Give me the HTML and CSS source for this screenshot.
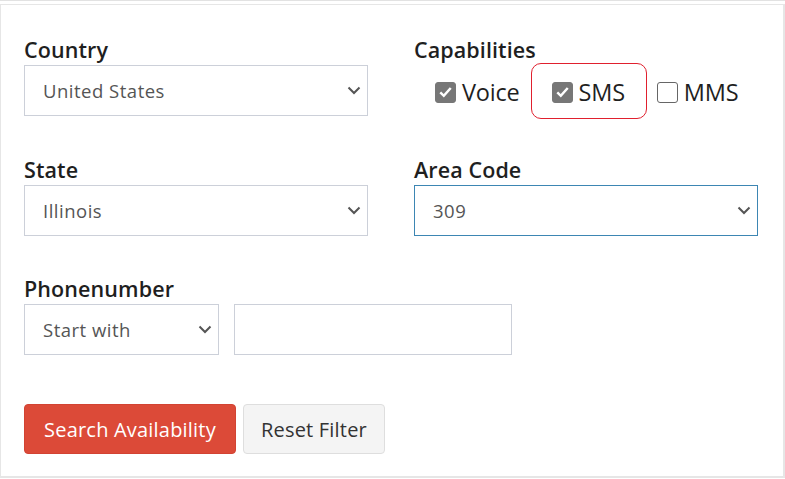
FILE: index.html
```html
<!DOCTYPE html>
<html>
<head>
<meta charset="utf-8">
<link rel="stylesheet" href="styles.css">
</head>
<body>
<div class="topline"></div>
<div class="card">
  <div class="grid">
    <div class="field">
      <div class="label">Country</div>
      <div class="select">
        <span>United States</span>
        <svg class="chev" width="14" height="9" viewBox="0 0 14 9"><path d="M1.5 1.5 L7 7 L12.5 1.5" fill="none" stroke="#555" stroke-width="2"/></svg>
      </div>
    </div>
    <div class="field">
      <div class="label">Capabilities</div>
      <div class="caps">
        <div class="cap">
          <span class="box checked"><svg width="20" height="20" viewBox="0 0 20 20"><path d="M4.5 10.5 L8.2 14 L15.5 5.8" fill="none" stroke="#fff" stroke-width="2.6"/></svg></span>
          <span class="cap-text">Voice</span>
        </div>
        <div class="cap highlighted">
          <span class="box checked"><svg width="20" height="20" viewBox="0 0 20 20"><path d="M4.5 10.5 L8.2 14 L15.5 5.8" fill="none" stroke="#fff" stroke-width="2.6"/></svg></span>
          <span class="cap-text">SMS</span>
        </div>
        <div class="cap">
          <span class="box"></span>
          <span class="cap-text">MMS</span>
        </div>
      </div>
    </div>
    <div class="field">
      <div class="label">State</div>
      <div class="select">
        <span>Illinois</span>
        <svg class="chev" width="14" height="9" viewBox="0 0 14 9"><path d="M1.5 1.5 L7 7 L12.5 1.5" fill="none" stroke="#555" stroke-width="2"/></svg>
      </div>
    </div>
    <div class="field">
      <div class="label">Area Code</div>
      <div class="select focused">
        <span>309</span>
        <svg class="chev" width="14" height="9" viewBox="0 0 14 9"><path d="M1.5 1.5 L7 7 L12.5 1.5" fill="none" stroke="#555" stroke-width="2"/></svg>
      </div>
    </div>
    <div class="field wide">
      <div class="label">Phonenumber</div>
      <div class="phone-row">
        <div class="select small">
          <span>Start with</span>
          <svg class="chev" width="14" height="9" viewBox="0 0 14 9"><path d="M1.5 1.5 L7 7 L12.5 1.5" fill="none" stroke="#555" stroke-width="2"/></svg>
        </div>
        <div class="input"></div>
      </div>
    </div>
  </div>
  <div class="actions">
    <button class="btn primary">Search Availability</button>
    <button class="btn secondary">Reset Filter</button>
  </div>
</div>
</body>
</html>
```
FILE: styles.css
```css
html, body {
  margin: 0;
  padding: 0;
  background: #fff;
}
body {
  width: 785px;
  height: 479px;
  overflow: hidden;
  font-family: "Open Sans", Lato, sans-serif;
}
.topline {
  height: 1px;
  background: #e2e2e2;
  margin-bottom: 3px;
}
.card {
  box-sizing: border-box;
  width: 785px;
  height: 474px;
  border: 1px solid #e6e6e6;
  border-right-width: 2px;
  border-bottom-width: 2px;
  padding: 31px 25px 0 23px;
}
.grid {
  display: grid;
  grid-template-columns: 344px 344px;
  column-gap: 46px;
  row-gap: 37px;
}
.field.wide {
  grid-column: 1 / -1;
  margin-top: 2px;
}
.label {
  font-size: 21.5px;
  font-weight: 600;
  color: #1f1f1f;
  line-height: 28px;
  height: 29px;
  letter-spacing: 0.1px;
}
.select, .input {
  box-sizing: border-box;
  height: 51px;
  border: 1px solid #ccd0d9;
  display: flex;
  align-items: center;
  justify-content: space-between;
  padding: 0 6px 0 18px;
  font-size: 18.5px;
  letter-spacing: 0.5px;
  color: #555;
}
.select.focused {
  border-color: #3d86b3;
}
.chev {
  display: block;
}
.caps {
  display: flex;
  align-items: center;
  height: 56px;
  margin-top: -2px;
  padding-left: 21px;
}
.cap {
  display: flex;
  align-items: center;
  gap: 6px;
  height: 54px;
  padding-top: 2px;
}
.cap.highlighted {
  box-sizing: border-box;
  border: 1.5px solid #e0202e;
  border-radius: 10px;
  padding: 2px 21px 0 20px;
  margin: 0 10px 0 11px;
  height: 56px;
}
.box {
  box-sizing: border-box;
  width: 21px;
  height: 21px;
  border: 1.5px solid #666;
  border-radius: 3px;
  display: flex;
  align-items: center;
  justify-content: center;
}
.box.checked {
  background: #777;
  border-color: #777;
}
.box svg {
  display: block;
}
.cap-text {
  font-size: 23.5px;
  color: #1f1f1f;
  letter-spacing: -0.2px;
}
.phone-row {
  display: flex;
  gap: 15px;
}
.select.small {
  width: 195px;
}
.input {
  width: 278px;
}
.actions {
  display: flex;
  gap: 7px;
  margin-top: 49px;
}
.btn {
  height: 50px;
  font-family: "Open Sans", Lato, sans-serif;
  font-size: 20px;
  letter-spacing: 0.2px;
  border-radius: 4px;
  padding: 0 6px;
  cursor: pointer;
}
.btn.primary {
  width: 212px;
  background: #dc4a38;
  border: 1px solid #d24333;
  color: #fff;
}
.btn.secondary {
  width: 142px;
  background: #f4f4f4;
  border: 1px solid #dedede;
  color: #333;
}
```
